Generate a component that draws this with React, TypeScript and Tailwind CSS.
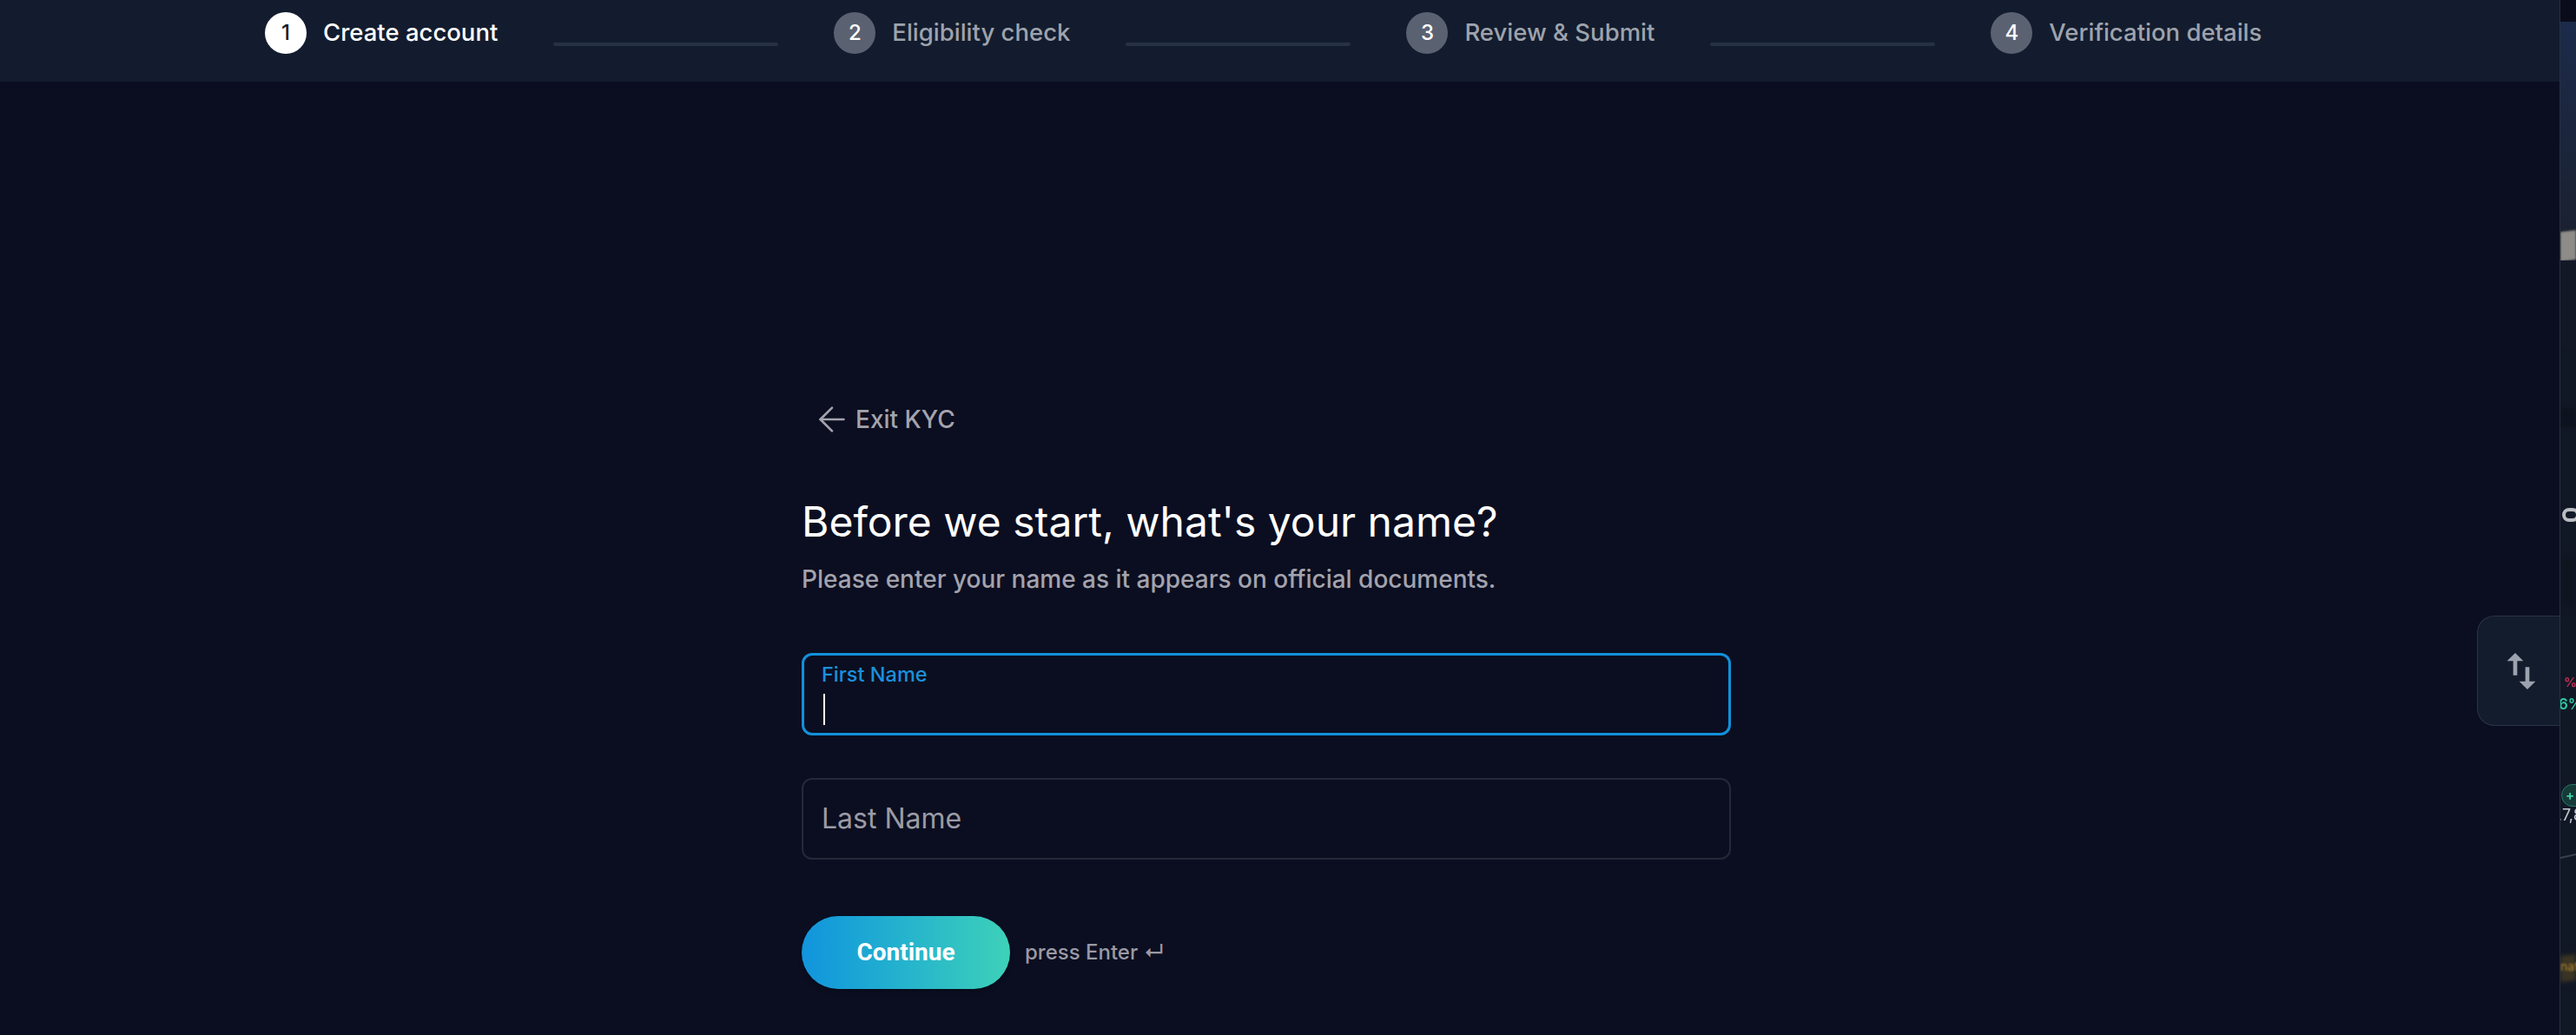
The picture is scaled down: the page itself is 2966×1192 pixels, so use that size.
import React from "react";
import { ArrowLeft } from "lucide-react";
import { MdSwapVert } from "react-icons/md";

const steps = [
  { n: 1, label: "Create account" },
  { n: 2, label: "Eligibility check" },
  { n: 3, label: "Review & Submit" },
  { n: 4, label: "Verification details" },
];

const Stepper = ({ current }: { current: number }) => (
  <div className="flex h-[94px] shrink-0 items-start bg-[#131c2e] pl-[305px] pt-[14px]">
    {steps.map((s, i) => {
      const active = s.n === current;
      return (
        <React.Fragment key={s.n}>
          {i > 0 && (
            <div className="mx-[64px] mb-[6px] h-[4px] w-[259px] self-center rounded-full bg-[#263244]" />
          )}
          <div className="flex h-[48px] items-center gap-[19px]">
            <div
              className={
                active
                  ? "flex h-[48px] w-[48px] items-center justify-center rounded-full bg-white text-[24px] font-medium text-[#131c2e]"
                  : "flex h-[48px] w-[48px] items-center justify-center rounded-full bg-[#5a6272] text-[24px] font-medium text-white"
              }
            >
              {s.n}
            </div>
            <span
              className={
                active
                  ? "text-[27.5px] font-medium leading-none text-white"
                  : "text-[27.5px] font-medium leading-none text-[#9ea3ad]"
              }
            >
              {s.label}
            </span>
          </div>
        </React.Fragment>
      );
    })}
  </div>
);

// blurred slice of the page behind the modal, peeking in on the right
const BackdropStrip = () => (
  <div className="relative h-full w-[19px] shrink-0 overflow-hidden border-l border-[#2a2f40] bg-[#111825]">
    <div className="absolute left-0 top-0 h-[25px] w-full bg-[#0b0c1a]" />
    <div className="absolute left-0 top-[25px] h-[240px] w-full bg-linear-to-b from-[#1c2b4b] to-[#1a2131]" />
    <div className="absolute left-0 top-[266px] h-[34px] w-full -skew-y-6 bg-[#8d8c88] blur-[1px]" />
    <div className="absolute left-0 top-[300px] h-[100px] w-full bg-[#121826]" />
    <div className="absolute left-0 top-[470px] h-[22px] w-full bg-[#0d131e] blur-[2px]" />
    <div className="absolute left-[2px] top-[585px] h-[16px] w-[20px] rounded-full border-[4px] border-[#b9bcc2] blur-[0.5px]" />
    <div className="absolute left-0 top-[640px] h-[60px] w-full bg-[#0f1520] blur-[3px]" />
    <span className="absolute left-[4px] top-[778px] text-[15px] font-semibold leading-none text-[#c0305a] blur-[0.6px]">
      %
    </span>
    <span className="absolute left-[-2px] top-[803px] text-[17px] font-semibold leading-none text-[#2cc7a0] blur-[0.6px]">
      6%
    </span>
    <div className="absolute left-[1px] top-[903px] h-[26px] w-[30px] rounded-full border border-[#2a7a68] bg-[#163a38] blur-[0.6px]" />
    <span className="absolute left-[6px] top-[908px] text-[15px] font-bold leading-none text-[#3ccfa8] blur-[0.6px]">
      +
    </span>
    <span className="absolute left-[-3px] top-[930px] text-[18px] leading-none text-[#c7c9cf] blur-[0.6px]">
      ,7,8
    </span>
    <div className="absolute left-0 top-[985px] h-[2px] w-full -skew-y-12 bg-[#3a4152]" />
    <div className="absolute left-0 top-[1100px] h-[30px] w-full -skew-y-6 bg-[#3a3423] blur-[2px]" />
    <span className="absolute left-[0px] top-[1106px] text-[14px] leading-none text-[#b58a2c] blur-[0.8px]">
      nat
    </span>
  </div>
);

const App = () => {
  return (
    <div
      className="relative flex h-[1192px] w-[2966px] overflow-hidden bg-[#0b0e20]"
      style={{ fontFamily: "Inter, 'Noto Sans', sans-serif" }}
    >
      <div className="flex w-[2947px] shrink-0 flex-col">
        <Stepper current={1} />

        <div className="ml-[923px] flex w-[1070px] flex-col pt-[375px]">
          <button className="flex h-[28px] items-center pl-[12px] text-[#a3a3ad]">
            <ArrowLeft size={46} strokeWidth={1.4} />
            <span className="ml-[4px] text-[28px] font-medium leading-none">
              Exit KYC
            </span>
          </button>

          <h1 className="mt-[80px] text-[48px] font-normal leading-none text-white">
            Before we start, what&apos;s your name?
          </h1>
          <p className="mt-[28px] text-[28px] font-medium leading-none text-[#a3a3ae]">
            Please enter your name as it appears on official documents.
          </p>

          <div className="mt-[71px] flex h-[95px] flex-col rounded-[12px] border-[3px] border-[#1291db] pl-[20px] pt-[10px]">
            <span className="text-[23.5px] font-medium leading-none text-[#1a91dc]">
              First Name
            </span>
            <span className="ml-[2px] mt-[10px] h-[36px] w-[2px] bg-white" />
          </div>

          <div className="mt-[49px] flex h-[94px] items-center rounded-[12px] border-2 border-[#262838] pl-[21px]">
            <span className="text-[32px] leading-none text-[#9b9ba5]">
              Last Name
            </span>
          </div>

          <div className="mt-[65px] flex items-center">
            <button
              className="flex h-[84px] w-[240px] items-center justify-center rounded-full bg-linear-to-r from-[#1294dd] to-[#3ed1b8] text-[28px] font-bold text-white shadow-md"
              style={{ fontFamily: "Roboto, sans-serif" }}
            >
              Continue
            </button>
            <span className="ml-[17px] text-[24px] font-medium text-[#9a99a6]">
              press Enter ↵
            </span>
          </div>
        </div>
      </div>

      <BackdropStrip />

      <button className="absolute right-[19px] top-[709px] flex h-[127px] w-[95px] items-center justify-center rounded-l-[20px] border border-r-0 border-[#2a3446] bg-[#131c2c] pl-[6px] text-[#9ca3af]">
        <MdSwapVert size={56} />
      </button>
    </div>
  );
};

export default App;
